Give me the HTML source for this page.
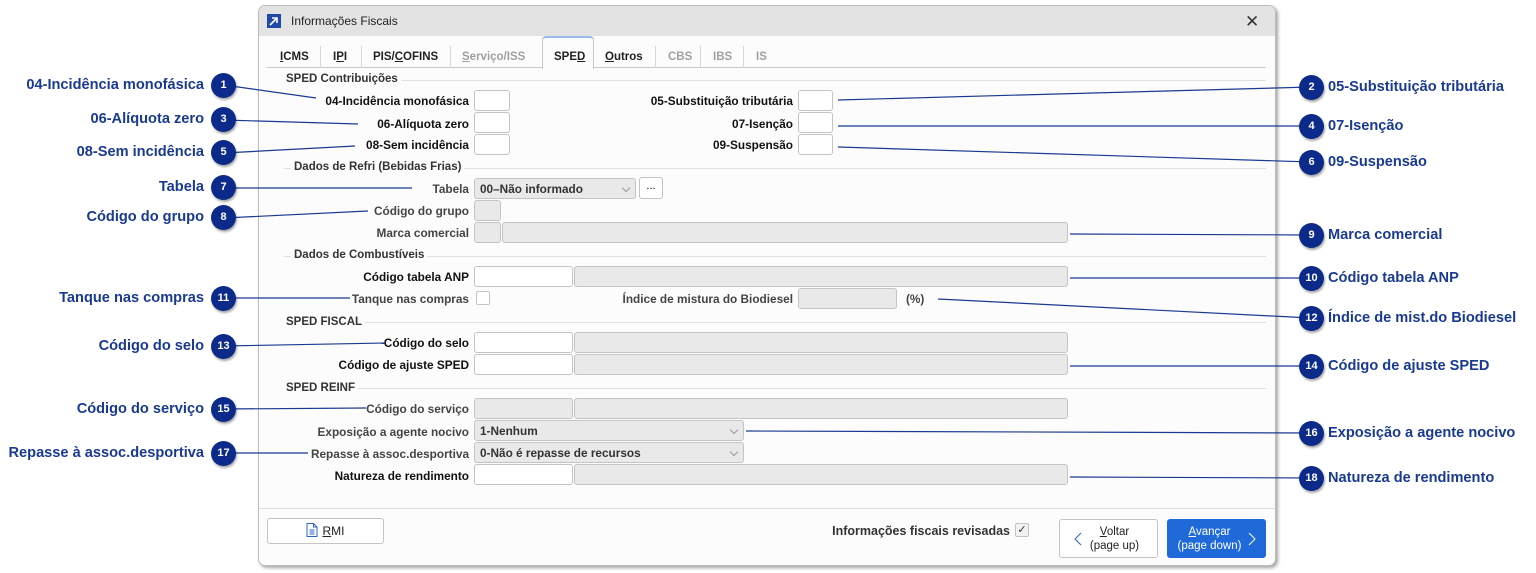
<!DOCTYPE html>
<html><head><meta charset="utf-8">
<style>
*{box-sizing:border-box;margin:0;padding:0}
body{width:1536px;height:573px;background:#fff;position:relative;overflow:hidden;font-family:"Liberation Sans",Arial,sans-serif}
.dlg{position:absolute;left:258px;top:5px;width:1018px;height:561px;background:#fcfcfc;border:1px solid #bdbdbd;border-radius:7px;box-shadow:2px 2px 3px rgba(0,0,0,.35);overflow:hidden}
.title{position:absolute;left:0;top:0;width:100%;height:30px;background:#e3e3e3}
.a{position:absolute}
.lb{position:absolute;font-size:11.8px;font-weight:bold;color:#444;text-align:right;white-space:nowrap;line-height:14px}
.lb.k{color:#111}
.bx{position:absolute;border:1px solid #c4c4c4;border-radius:3px;background:#fff;height:21px}
.g{background:#e9e9e9}
.sec{position:absolute;font-size:11.5px;font-weight:bold;color:#333;background:#fcfcfc;padding:0 3px;line-height:13px}
.hl{position:absolute;height:1px;background:#e0e0e0}
.tab{position:absolute;top:45px;font-size:11.5px;font-weight:bold;color:#222}
.tab.d{color:#a0a0a0}
.sep{position:absolute;top:40px;width:1px;height:22px;background:#d8d8d8}
.c{position:absolute;width:25px;height:25px;border-radius:50%;background:#0b2a8a;color:#fff;font-size:11px;font-weight:bold;text-align:center;line-height:25px;box-shadow:1px 2px 2px rgba(0,0,0,.35)}
.cl{position:absolute;font-size:14.6px;font-weight:bold;color:#1a3a92;white-space:nowrap;line-height:18px}
.cl.r{text-align:right}
.sel{position:absolute;font-size:11.8px;font-weight:bold;color:#333;padding-left:5px;line-height:20px}
.chev{position:absolute;right:6px;top:6px;width:6px;height:6px;border-right:1px solid #999;border-bottom:1px solid #999;transform:rotate(45deg)}
u{text-decoration:underline}
</style></head><body>

<div class="dlg">
 <div class="title"></div>
 <div class="a" style="left:8px;top:8px;width:14px;height:14px;background:#1f4aa8"><svg width="14" height="14"><path d="M3 11 L10 4 M5 4 H10 V9" stroke="#fff" stroke-width="1.6" fill="none"/></svg></div>
 <div class="a" style="left:32px;top:8px;font-size:12px;color:#222">Informações Fiscais</div>
 <div class="a" style="left:986px;top:6px;font-size:17px;color:#333">✕</div>

 <div class="hl" style="left:8px;top:61px;width:999px;background:#c8c8c8"></div>
 <div class="a" style="left:283px;top:30px;width:52px;height:33px;background:#fcfcfc;border:1px solid #c8c8c8;border-bottom:none;border-top:2px solid #9bbbe8;border-radius:4px 4px 0 0"></div>
 <div class="tab" style="left:21px"><u>I</u>CMS</div>
 <div class="sep" style="left:61px"></div>
 <div class="tab" style="left:74px">I<u>P</u>I</div>
 <div class="sep" style="left:102px"></div>
 <div class="tab" style="left:114px">PIS/<u>C</u>OFINS</div>
 <div class="sep" style="left:191px"></div>
 <div class="tab d" style="left:203px"><u>S</u>erviço/ISS</div>
 <div class="tab" style="left:295px">SPE<u>D</u></div>
 <div class="tab" style="left:346px"><u>O</u>utros</div>
 <div class="sep" style="left:396px"></div>
 <div class="tab d" style="left:409px">CBS</div>
 <div class="sep" style="left:441px"></div>
 <div class="tab d" style="left:454px">IBS</div>
 <div class="sep" style="left:484px"></div>
 <div class="tab d" style="left:497px">IS</div>
</div>

<div class="hl" style="left:284px;top:80px;width:982px"></div><div class="sec" style="left:283px;top:73px">SPED Contribuições</div>
<div class="lb k" style="right:1067px;top:94px">04-Incidência monofásica</div><div class="bx" style="left:474px;top:90px;width:36px"></div>
<div class="lb k" style="right:1067px;top:117px">06-Alíquota zero</div><div class="bx" style="left:474px;top:112px;width:36px"></div>
<div class="lb k" style="right:1067px;top:138px">08-Sem incidência</div><div class="bx" style="left:474px;top:134px;width:36px"></div>
<div class="lb k" style="right:743px;top:94px">05-Substituição tributária</div><div class="bx" style="left:798px;top:90px;width:35px"></div>
<div class="lb k" style="right:743px;top:117px">07-Isenção</div><div class="bx" style="left:798px;top:112px;width:35px"></div>
<div class="lb k" style="right:743px;top:138px">09-Suspensão</div><div class="bx" style="left:798px;top:134px;width:35px"></div>

<div class="hl" style="left:284px;top:168px;width:982px"></div><div class="sec" style="left:291px;top:161px">Dados de Refri (Bebidas Frias)</div>
<div class="lb" style="right:1067px;top:182px">Tabela</div>
<div class="bx g" style="left:474px;top:178px;width:162px"><div class="sel">00–Não informado</div><div class="chev"></div></div>
<div class="bx" style="left:639px;top:177px;width:24px;height:22px;font-size:11px;text-align:center;line-height:16px">...</div>
<div class="lb" style="right:1067px;top:204px">Código do grupo</div><div class="bx g" style="left:474px;top:200px;width:27px"></div>
<div class="lb" style="right:1067px;top:226px">Marca comercial</div><div class="bx g" style="left:474px;top:222px;width:27px"></div><div class="bx g" style="left:502px;top:222px;width:566px"></div>

<div class="hl" style="left:284px;top:256px;width:982px"></div><div class="sec" style="left:291px;top:249px">Dados de Combustíveis</div>
<div class="lb k" style="right:1067px;top:270px">Código tabela ANP</div><div class="bx" style="left:474px;top:266px;width:99px"></div><div class="bx g" style="left:574px;top:266px;width:494px"></div>
<div class="lb" style="right:1067px;top:292px">Tanque nas compras</div><div class="bx" style="left:476px;top:291px;width:14px;height:14px;border-radius:2px"></div>
<div class="lb" style="right:743px;top:292px">Índice de mistura do Biodiesel</div><div class="bx g" style="left:798px;top:288px;width:99px"></div>
<div class="lb" style="left:906px;top:292px">(%)</div>

<div class="hl" style="left:284px;top:322px;width:982px"></div><div class="sec" style="left:283px;top:316px">SPED FISCAL</div>
<div class="lb k" style="right:1067px;top:336px">Código do selo</div><div class="bx" style="left:474px;top:332px;width:99px"></div><div class="bx g" style="left:574px;top:332px;width:494px"></div>
<div class="lb k" style="right:1067px;top:358px">Código de ajuste SPED</div><div class="bx" style="left:474px;top:354px;width:99px"></div><div class="bx g" style="left:574px;top:354px;width:494px"></div>

<div class="hl" style="left:284px;top:388px;width:982px"></div><div class="sec" style="left:283px;top:382px">SPED REINF</div>
<div class="lb" style="right:1067px;top:402px">Código do serviço</div><div class="bx g" style="left:474px;top:398px;width:99px"></div><div class="bx g" style="left:574px;top:398px;width:494px"></div>
<div class="lb" style="right:1067px;top:425px">Exposição a agente nocivo</div>
<div class="bx g" style="left:474px;top:420px;width:270px"><div class="sel">1-Nenhum</div><div class="chev"></div></div>
<div class="lb" style="right:1067px;top:447px">Repasse à assoc.desportiva</div>
<div class="bx g" style="left:474px;top:442px;width:270px"><div class="sel">0-Não é repasse de recursos</div><div class="chev"></div></div>
<div class="lb k" style="right:1067px;top:469px">Natureza de rendimento</div><div class="bx" style="left:474px;top:464px;width:99px"></div><div class="bx g" style="left:574px;top:464px;width:494px"></div>

<div class="hl" style="left:259px;top:508px;width:1016px;background:#dedede"></div>
<div class="bx" style="left:267px;top:518px;width:117px;height:26px;font-size:12px;color:#222;text-align:center;line-height:24px">
 <svg width="12" height="14" style="vertical-align:-2px;margin-right:4px"><path d="M1 .5H7.5L11 4V13.5H1Z M7.5 .5V4H11 M3.5 7H8.5 M3.5 9H8.5 M3.5 11H8.5" stroke="#2d64c8" fill="none" stroke-width="1"/></svg><u>R</u>MI</div>
<div class="lb" style="right:526px;top:524px;font-size:12.5px;color:#333">Informações fiscais revisadas</div>
<div class="bx" style="left:1015px;top:523px;width:14px;height:14px;border-radius:2px;background:#f2f2f2;font-size:11px;line-height:12px;text-align:center;color:#333">✓</div>
<div class="bx" style="left:1059px;top:519px;width:99px;height:39px;font-size:11.5px;color:#222;text-align:center;line-height:14px;padding-top:5px;padding-left:12px"><u>V</u>oltar<br>(page up)
 <svg class="a" style="left:14px;top:12px" width="8" height="14"><path d="M7 1L1 7L7 13" stroke="#2d64c8" fill="none"/></svg></div>
<div class="bx" style="left:1167px;top:519px;width:99px;height:39px;background:#1f6ad8;border-color:#1f6ad8;font-size:11.5px;color:#fff;text-align:center;line-height:14px;padding-top:5px;padding-right:14px"><u>A</u>vançar<br>(page down)
 <svg class="a" style="left:80px;top:12px" width="8" height="14"><path d="M1 1L7 7L1 13" stroke="#fff" fill="none"/></svg></div>

<svg class="a" style="left:0;top:0" width="1536" height="573">
<g stroke="#1a3a92" stroke-width="1.2" fill="none">
<path d="M224 85L316 98"/><path d="M224 120L358 124"/><path d="M224 153L355 146"/>
<path d="M224 188L412 188"/><path d="M224 218L368 211"/><path d="M224 298L350 298"/>
<path d="M224 346L385 343"/><path d="M224 409L366 408"/><path d="M224 453L308 453"/>
<path d="M838 100L1311 87"/><path d="M838 126L1311 126"/><path d="M838 147L1311 162"/>
<path d="M1070 234L1311 235"/><path d="M1070 278L1311 278"/><path d="M938 299L1311 318"/>
<path d="M1070 366L1311 366"/><path d="M746 431L1311 433"/><path d="M1070 477L1311 478"/>
</g></svg>

<div class="c" style="left:211px;top:73px">1</div><div class="cl r" style="right:1332px;top:76px">04-Incidência monofásica</div>
<div class="c" style="left:211px;top:107px">3</div><div class="cl r" style="right:1332px;top:110px">06-Alíquota zero</div>
<div class="c" style="left:211px;top:140px">5</div><div class="cl r" style="right:1332px;top:143px">08-Sem incidência</div>
<div class="c" style="left:211px;top:175px">7</div><div class="cl r" style="right:1332px;top:178px">Tabela</div>
<div class="c" style="left:211px;top:205px">8</div><div class="cl r" style="right:1332px;top:208px">Código do grupo</div>
<div class="c" style="left:211px;top:286px">11</div><div class="cl r" style="right:1332px;top:289px">Tanque nas compras</div>
<div class="c" style="left:211px;top:334px">13</div><div class="cl r" style="right:1332px;top:337px">Código do selo</div>
<div class="c" style="left:211px;top:397px">15</div><div class="cl r" style="right:1332px;top:400px">Código do serviço</div>
<div class="c" style="left:211px;top:441px">17</div><div class="cl r" style="right:1332px;top:444px">Repasse à assoc.desportiva</div>

<div class="c" style="left:1299px;top:75px">2</div><div class="cl" style="left:1328px;top:78px">05-Substituição tributária</div>
<div class="c" style="left:1299px;top:114px">4</div><div class="cl" style="left:1328px;top:117px">07-Isenção</div>
<div class="c" style="left:1299px;top:150px">6</div><div class="cl" style="left:1328px;top:153px">09-Suspensão</div>
<div class="c" style="left:1299px;top:223px">9</div><div class="cl" style="left:1328px;top:226px">Marca comercial</div>
<div class="c" style="left:1299px;top:266px">10</div><div class="cl" style="left:1328px;top:269px">Código tabela ANP</div>
<div class="c" style="left:1299px;top:306px">12</div><div class="cl" style="left:1328px;top:309px">Índice de mist.do Biodiesel</div>
<div class="c" style="left:1299px;top:354px">14</div><div class="cl" style="left:1328px;top:357px">Código de ajuste SPED</div>
<div class="c" style="left:1299px;top:421px">16</div><div class="cl" style="left:1328px;top:424px">Exposição a agente nocivo</div>
<div class="c" style="left:1299px;top:466px">18</div><div class="cl" style="left:1328px;top:469px">Natureza de rendimento</div>
</body></html>
